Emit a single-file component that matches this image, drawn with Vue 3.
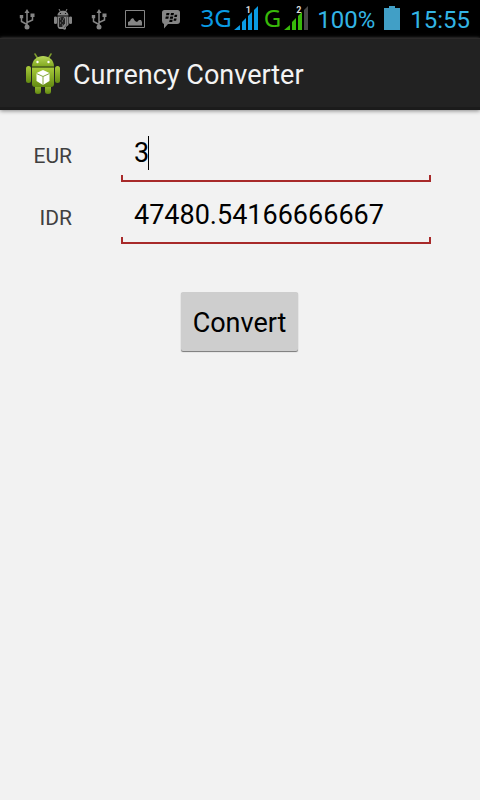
<script setup>
import { ref } from 'vue'

const eur = ref('3')
const idr = ref('47480.54166666667')
const rate = 47480.54166666667 / 3

function convert() {
  const amount = Number.parseFloat(eur.value)
  idr.value = Number.isNaN(amount) ? '' : String(amount * rate)
}
</script>

<template>
  <div class="screen">
    <div class="status">
      <div class="notices">
        <svg class="notice" viewBox="0 0 20 22" aria-label="USB connected">
          <g fill="none" stroke="#858585" stroke-width="1.5">
            <path d="M10 3v15M10 15.500L4.500 12.500V7M10 13.500L15.500 11V6.500" />
          </g>
          <path fill="#858585" d="M10 0l2.500 4h-5zM2.800 6h3.400v3.200H2.800zM13.500 4.500h4v3.500h-4z" />
          <circle cx="10" cy="18" r="2.500" fill="#858585" />
        </svg>
        <svg class="notice" viewBox="0 0 20 22" aria-label="USB debugging">
          <path d="M6 0l1.500 3M14 0l-1.500 3" stroke="#858585" />
          <path fill="#858585" d="M4.500 6.500C4.500 0 15.500 0 15.500 6.500zM1 8.500Q1 7.500 2.500 7.500T4 8.500V14Q4 15 2.500 15T1 14zM16 8.500Q16 7.500 17.500 7.500T19 8.500V14Q19 15 17.500 15T16 14zM4.500 7.500h11V16L13 18v2q-1.500 1.500-3 0H7q-2 0-2.500-3z" />
          <circle cx="7.500" cy="4.500" r=".6" /><circle cx="12.500" cy="4.500" r=".6" />
          <path fill="#222" d="M6 9l4-1.500 2 2v5L9 18H6z" />
          <path stroke="#888" d="M7 10h1M9 12h1M7 14h1M9 16h1M10 10h1" />
          <path stroke="#555" d="M13.500 8v8L11 19" fill="none" />
        </svg>
        <svg class="notice" viewBox="0 0 20 22" aria-label="USB connected">
          <g fill="none" stroke="#858585" stroke-width="1.5">
            <path d="M10 3v15M10 15.500L4.500 12.500V7M10 13.500L15.500 11V6.500" />
          </g>
          <path fill="#858585" d="M10 0l2.500 4h-5zM2.800 6h3.400v3.200H2.800zM13.500 4.500h4v3.500h-4z" />
          <circle cx="10" cy="18" r="2.500" fill="#858585" />
        </svg>
        <svg class="notice" viewBox="0 0 20 22" aria-label="Screenshot saved">
          <path fill="none" stroke="#858585" d="M.5 1.500h19v17H.5z" />
          <path fill="#858585" d="M3 16.500V13l2-1 1-2 2-1 2 3 2 1 2-2h2l1 2v3.500z" />
        </svg>
        <svg class="notice" viewBox="0 0 20 22" aria-label="Messenger">
          <path fill="#858585" d="M3.500 1h13Q19 1 19 3.500V12q0 3-3 3H7l-4 4.500V15Q1 14.500 1 12V3.500Q1 1 3.500 1z" />
          <path fill="#000" d="M5.500 4h3l-.5 2.300H5zM10 4h3l-.5 2.300h-3zM4.800 7.500h3l-.5 2.300h-3zM9.300 7.500h3l-.5 2.300h-3zM13.700 5.800h2.600l-.5 2.300h-2.600zM8.700 10.800h3l-.5 2.300h-3zM13 9.500h2.600l-.5 2.300h-2.600z" />
        </svg>
      </div>
      <div class="system">
        <span class="network sim-one">3G</span>
        <span class="signal">
          <svg viewBox="0 0 24 24" aria-hidden="true">
            <path fill="#0a9be4" d="M0 24l6-5v5zM8 24v-8l4-4v12zM14 24V10l4-4v18zM20 24V4l4-4v24z" />
          </svg>
          <span class="slot">1</span>
        </span>
        <span class="network sim-two">G</span>
        <span class="signal">
          <svg viewBox="0 0 24 24" aria-hidden="true">
            <path fill="#38b90a" d="M0 24l6-5v5zM8 24v-8l4-4v12zM14 24V10l4-4v18z" />
            <path fill="#484848" d="M20 24V4l4-4v24z" />
          </svg>
          <span class="slot">2</span>
        </span>
        <span class="reading charge">100%</span>
        <svg class="battery" viewBox="0 0 16 24" aria-hidden="true">
          <path fill="#419fc6" d="M5 0h6v2h5v22H0V2h5z" />
        </svg>
        <span class="reading">15:55</span>
      </div>
    </div>

    <header class="bar">
      <svg class="logo" viewBox="0 0 36 42" aria-hidden="true">
        <defs>
          <linearGradient id="shell" x1="0" y1="0" x2="0" y2="1">
            <stop offset="0" stop-color="#a9cb3b" />
            <stop offset="1" stop-color="#638a12" />
          </linearGradient>
          <linearGradient id="head" x1="0" y1="0" x2="0" y2="1">
            <stop offset="0" stop-color="#b8d759" />
            <stop offset="1" stop-color="#81a820" />
          </linearGradient>
        </defs>
        <path d="M10 1l3 5M26 1l-3 5" stroke="#7e9d2e" stroke-width="1.500" stroke-linecap="round" />
        <path fill="url(#shell)" d="M10 30h6v8.500Q16 41 13 41t-3-2.500zM20 30h6v8.500Q26 41 23 41t-3-2.500z" />
        <rect x="1" y="13" width="5" height="17" rx="2.500" fill="url(#shell)" />
        <rect x="30" y="13" width="5" height="17" rx="2.500" fill="url(#shell)" />
        <path fill="url(#head)" d="M7 13.500C7-.5 29-.5 29 13.500z" />
        <path fill="url(#shell)" d="M7 14.500h22V31q0 3-3 3H10q-3 0-3-3z" />
        <path d="M7 14h22" stroke="#56761a" />
        <circle cx="12.500" cy="9" r="1.200" fill="#fff" /><circle cx="23.500" cy="9" r="1.200" fill="#fff" />
        <path fill="#fff" d="M18 17l6.500 3v8L18 32l-6.500-4v-8z" />
        <path d="M11.500 20.500l6.500 3 6.500-3M18 23.500V32" fill="none" stroke="#86a83c" />
      </svg>
      <h1>Currency Converter</h1>
    </header>

    <main>
      <form @submit.prevent="convert">
        <div class="row">
          <label for="eur">EUR</label>
          <div class="field">
            <input id="eur" v-model="eur" type="text" inputmode="decimal" />
            <span class="caret"></span>
          </div>
        </div>
        <div class="row">
          <label for="idr">IDR</label>
          <div class="field">
            <input id="idr" v-model="idr" type="text" inputmode="decimal" />
          </div>
        </div>
        <button type="submit">Convert</button>
      </form>
    </main>
  </div>
</template>

<style>
body {
  background: #f2f2f2;
}
</style>

<style scoped>
.screen {
  min-height: 100vh;
  background: #f2f2f2;
  font-family: Roboto, sans-serif;
  color: #000;
}
.status {
  display: flex;
  justify-content: space-between;
  align-items: center;
  height: 38px;
  padding: 0 10px 0 17px;
  background: #000;
}
.notices {
  display: flex;
  gap: 16px;
  padding-top: 2px;
}
.notice {
  width: 20px;
  height: 22px;
}
.system {
  display: flex;
  align-items: center;
  padding-bottom: 2px;
  color: #33b5e5;
  font-size: 24px;
  line-height: 32px;
}
.network {
  font-family: "Noto Sans", sans-serif;
}
.sim-one {
  margin-right: 2px;
  color: #0a9be4;
}
.sim-two {
  margin: 0 3px 0 6px;
  color: #38b90a;
}
.signal {
  position: relative;
  width: 24px;
  height: 24px;
}
.signal svg {
  display: block;
  width: 24px;
  height: 24px;
}
.slot {
  position: absolute;
  top: 0;
  left: 12px;
  color: #ddd;
  font-size: 9px;
  font-weight: 700;
  line-height: 9px;
}
.reading {
  padding-top: 4px;
}
.charge {
  margin-left: 9px;
}
.battery {
  width: 16px;
  height: 24px;
  margin: 0 10px 0 9px;
}
.bar {
  position: relative;
  display: flex;
  align-items: center;
  gap: 12px;
  height: 72px;
  padding: 2px 25px 0;
  box-sizing: border-box;
  background: #222;
  border-top: 1px solid #2c2a2a;
  border-bottom: 3px solid #1b1b1b;
  box-shadow: 0 1px 4px #888;
}
.logo {
  width: 36px;
  height: 42px;
}
h1 {
  margin: 0;
  padding-top: 2px;
  color: #f3f3f3;
  font-size: 27px;
  font-weight: 400;
  line-height: 32px;
}
form {
  display: flex;
  flex-direction: column;
  padding: 11px 49px 0 32px;
}
.row {
  display: flex;
  align-items: center;
  height: 62px;
}
label {
  width: 40px;
  margin-right: 49px;
  padding-top: 8px;
  color: #404040;
  font-size: 21px;
  line-height: 24px;
  text-align: right;
}
.field {
  position: relative;
  flex: 1;
}
.field::after {
  content: "";
  position: absolute;
  right: 0;
  bottom: 0;
  left: 0;
  height: 5px;
  border: 2px solid #a82a2a;
  border-top: 0;
  pointer-events: none;
}
input {
  display: block;
  width: 100%;
  height: 60px;
  box-sizing: border-box;
  padding: 2px 13px 0;
  border: 0;
  outline: 0;
  background: transparent;
  color: #000;
  font: 27px/32px Roboto, sans-serif;
}
.caret {
  position: absolute;
  top: 14px;
  left: 27px;
  width: 1px;
  height: 34px;
  background: #000;
}
button {
  align-self: center;
  height: 59px;
  margin: 47px 0 0 16px;
  padding: 2px 12px 0;
  border: 0;
  border-radius: 2px;
  background: #cecece;
  box-shadow: 0 1px 1px #777;
  color: #000;
  font: 27px/32px Roboto, sans-serif;
}
</style>
